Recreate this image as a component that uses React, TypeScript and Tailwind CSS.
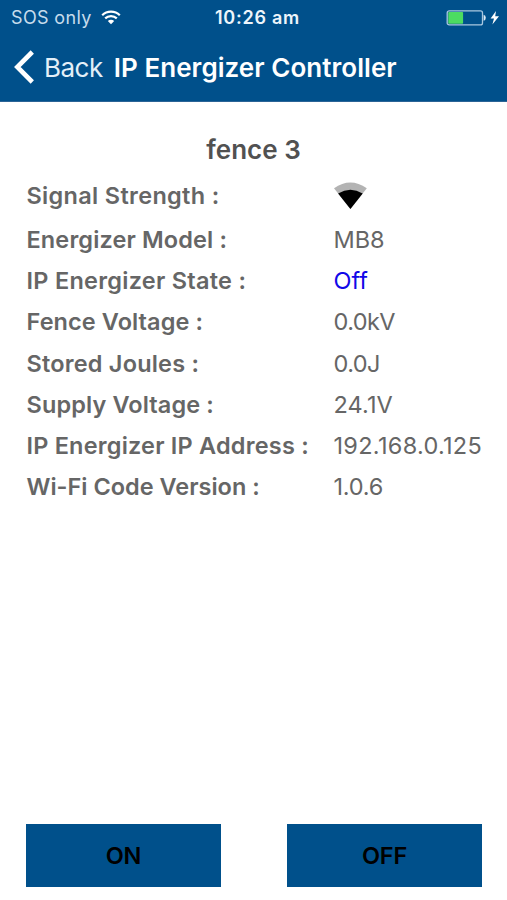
type Detail = {
  label: string;
  value: string;
  labelStyle: string;
  valueStyle: string;
};

const details: Detail[] = [
  { label: 'Energizer Model :', value: 'MB8', labelStyle: 'tracking-[0.13px]', valueStyle: 'tracking-[-0.1px]' },
  { label: 'IP Energizer State :', value: 'Off', labelStyle: 'tracking-[0.27px]', valueStyle: 'text-[#1208e8]' },
  { label: 'Fence Voltage :', value: '0.0kV', labelStyle: 'tracking-[0.08px]', valueStyle: 'tracking-[-0.6px]' },
  { label: 'Stored Joules :', value: '0.0J', labelStyle: 'tracking-[0.2px]', valueStyle: 'tracking-[-0.6px]' },
  { label: 'Supply Voltage :', value: '24.1V', labelStyle: 'tracking-[0.12px]', valueStyle: 'tracking-[0.1px]' },
  { label: 'IP Energizer IP Address :', value: '192.168.0.125', labelStyle: 'tracking-[0.2px]', valueStyle: 'tracking-[0.3px]' },
  { label: 'Wi-Fi Code Version :', value: '1.0.6', labelStyle: '', valueStyle: 'tracking-[-0.2px]' },
];

function WifiIcon() {
  return (
    <svg width="20" height="15" viewBox="0 0 20 15" fill="none" className="ml-[9px]">
      <path d="M1.2 5.2C6 .4 14 .4 18.8 5.2" stroke="white" strokeWidth="2.2" />
      <path d="M4.2 8.4C7.4 5.3 12.6 5.3 15.8 8.4" stroke="white" strokeWidth="2.2" />
      <path d="M6.8 11C8.6 9.2 11.4 9.2 13.2 11L10 14.2Z" fill="white" />
    </svg>
  );
}

function Battery() {
  return (
    <svg width="53" height="18" viewBox="0 0 53 18" className="ml-auto">
      <rect x="1.2" y="1.9" width="35.3" height="14" rx="2" fill="none" stroke="#a9c7e0" strokeWidth="1.3" />
      <rect x="2.3" y="3" width="14.8" height="11.8" rx="0.8" fill="#4cdc61" />
      <path d="M37.6 5.8Q39.8 6.2 39.8 8.8T37.6 11.8Z" fill="#dce9f4" />
      <path d="M50 2 44.6 9.4H48L46.4 15.6 53 7.2H49.2Z" fill="white" />
    </svg>
  );
}

function SignalIcon() {
  return (
    <svg width="34" height="28" viewBox="0 0 34 28">
      <path d="M0 6.3Q16.3-5.2 32.8 6.3L16.4 27Z" fill="#b3b3b3" />
      <path d="M4.1 11.5Q16.4 4.1 28.7 11.5L16.4 27Z" fill="black" />
    </svg>
  );
}

export default function App() {
  return (
    <div className="flex h-[900px] w-[507px] flex-col bg-white font-['Inter',sans-serif] whitespace-nowrap">
      <header className="h-[102px] shrink-0 border-b border-[#2b6496] bg-[#00508b] text-white">
        <div className="flex h-[35px] items-center pr-[8px] pl-[11px]">
          <div className="flex w-[204px] items-center text-[18px] tracking-[0.35px] text-[#c7dcec]">
            SOS only
            <WifiIcon />
          </div>
          <div className="text-[18px] font-semibold tracking-[0.75px] text-[#edf5fb]">10:26 am</div>
          <Battery />
        </div>
        <div className="flex h-[64px] items-center pl-[14px]">
          <svg width="21" height="34" viewBox="0 0 21 34" fill="none">
            <path d="M18.3 2 3.3 17l15 15" stroke="white" strokeWidth="4.6" />
          </svg>
          <span className="ml-[9px] text-[26px] tracking-[-0.5px] text-[#e3eff8]">Back</span>
          <h1 className="ml-[11px] text-[26px] font-semibold tracking-[0.05px]">IP Energizer Controller</h1>
        </div>
      </header>

      <main className="flex grow flex-col pt-[32px]">
        <h2 className="h-[32px] text-center text-[26px] leading-[32px] font-semibold text-[#515151]">fence 3</h2>
        <dl className="pt-[7px] pl-[26.5px] text-[23.5px] text-[#666]">
          <div className="flex h-[46px] items-center pb-[1px]">
            <dt className="w-[307px] font-semibold tracking-[0.32px]">Signal Strength :</dt>
            <dd><SignalIcon /></dd>
          </div>
          {details.map((d) => (
            <div key={d.label} className="flex h-[41.2px] items-center">
              <dt className={`w-[307px] font-semibold ${d.labelStyle}`}>{d.label}</dt>
              <dd className={d.valueStyle}>{d.value}</dd>
            </div>
          ))}
        </dl>
        <div className="mt-auto mb-[13px] flex justify-between pr-[25px] pl-[26px]">
          <button className="h-[63px] w-[195px] bg-[#00508b] text-[23.5px] font-semibold tracking-[-0.2px] text-black">ON</button>
          <button className="h-[63px] w-[195px] bg-[#00508b] text-[23.5px] font-semibold tracking-[-0.2px] text-black">OFF</button>
        </div>
      </main>
    </div>
  );
}
